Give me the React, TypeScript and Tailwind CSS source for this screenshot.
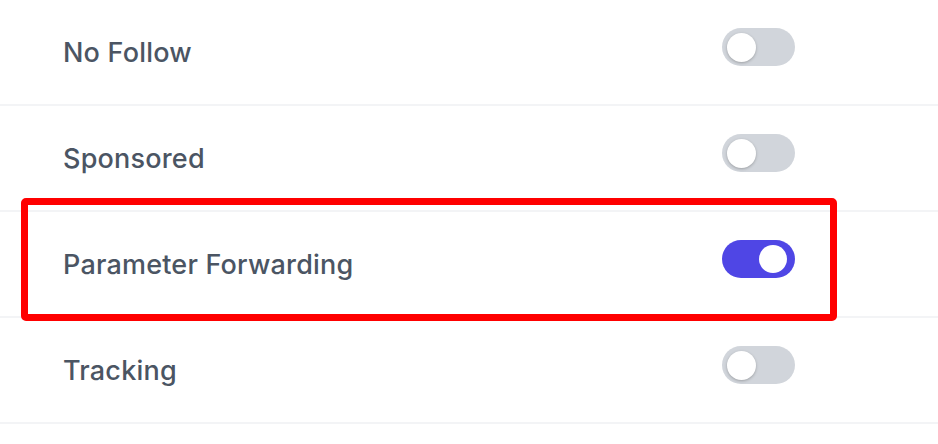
import React from "react";

const rows = [
  { label: "No Follow", on: false },
  { label: "Sponsored", on: false },
  { label: "Parameter Forwarding", on: true },
  { label: "Tracking", on: false },
];

function Toggle({ on }: { on: boolean }) {
  return (
    <div
      className={
        on
          ? "mb-[10px] flex h-[38px] w-[73px] items-center justify-end rounded-full bg-[#4f46e5] pl-[5px] pr-[8px]"
          : "mb-[10px] flex h-[38px] w-[73px] items-center justify-start rounded-full bg-[#d1d5db] px-[5px]"
      }
    >
      <div
        className={
          on
            ? "h-[28px] w-[28px] rounded-full bg-white"
            : "h-[29px] w-[29px] rounded-full bg-white shadow-[0_1px_3px_rgba(0,0,0,0.25)]"
        }
      />
    </div>
  );
}

export default function App() {
  return (
    <div
      className="relative h-[444px] w-[938px] overflow-hidden bg-white"
      style={{ fontFamily: "Inter, 'Noto Sans', sans-serif" }}
    >
      <div className="flex flex-col">
        {rows.map((r) => (
          <div
            key={r.label}
            className="flex h-[106px] items-center justify-between border-b-2 border-[#f3f4f6] pl-[63px] pr-[143px]"
          >
            <span className="mt-[3px] text-[27px] font-medium tracking-[0.2px] text-[#4b5563]">{r.label}</span>
            <Toggle on={r.on} />
          </div>
        ))}
      </div>
      <div className="pointer-events-none absolute left-[21px] top-[198px] h-[123px] w-[816px] rounded-[5px] border-[7px] border-[#ff0000]" />
    </div>
  );
}
